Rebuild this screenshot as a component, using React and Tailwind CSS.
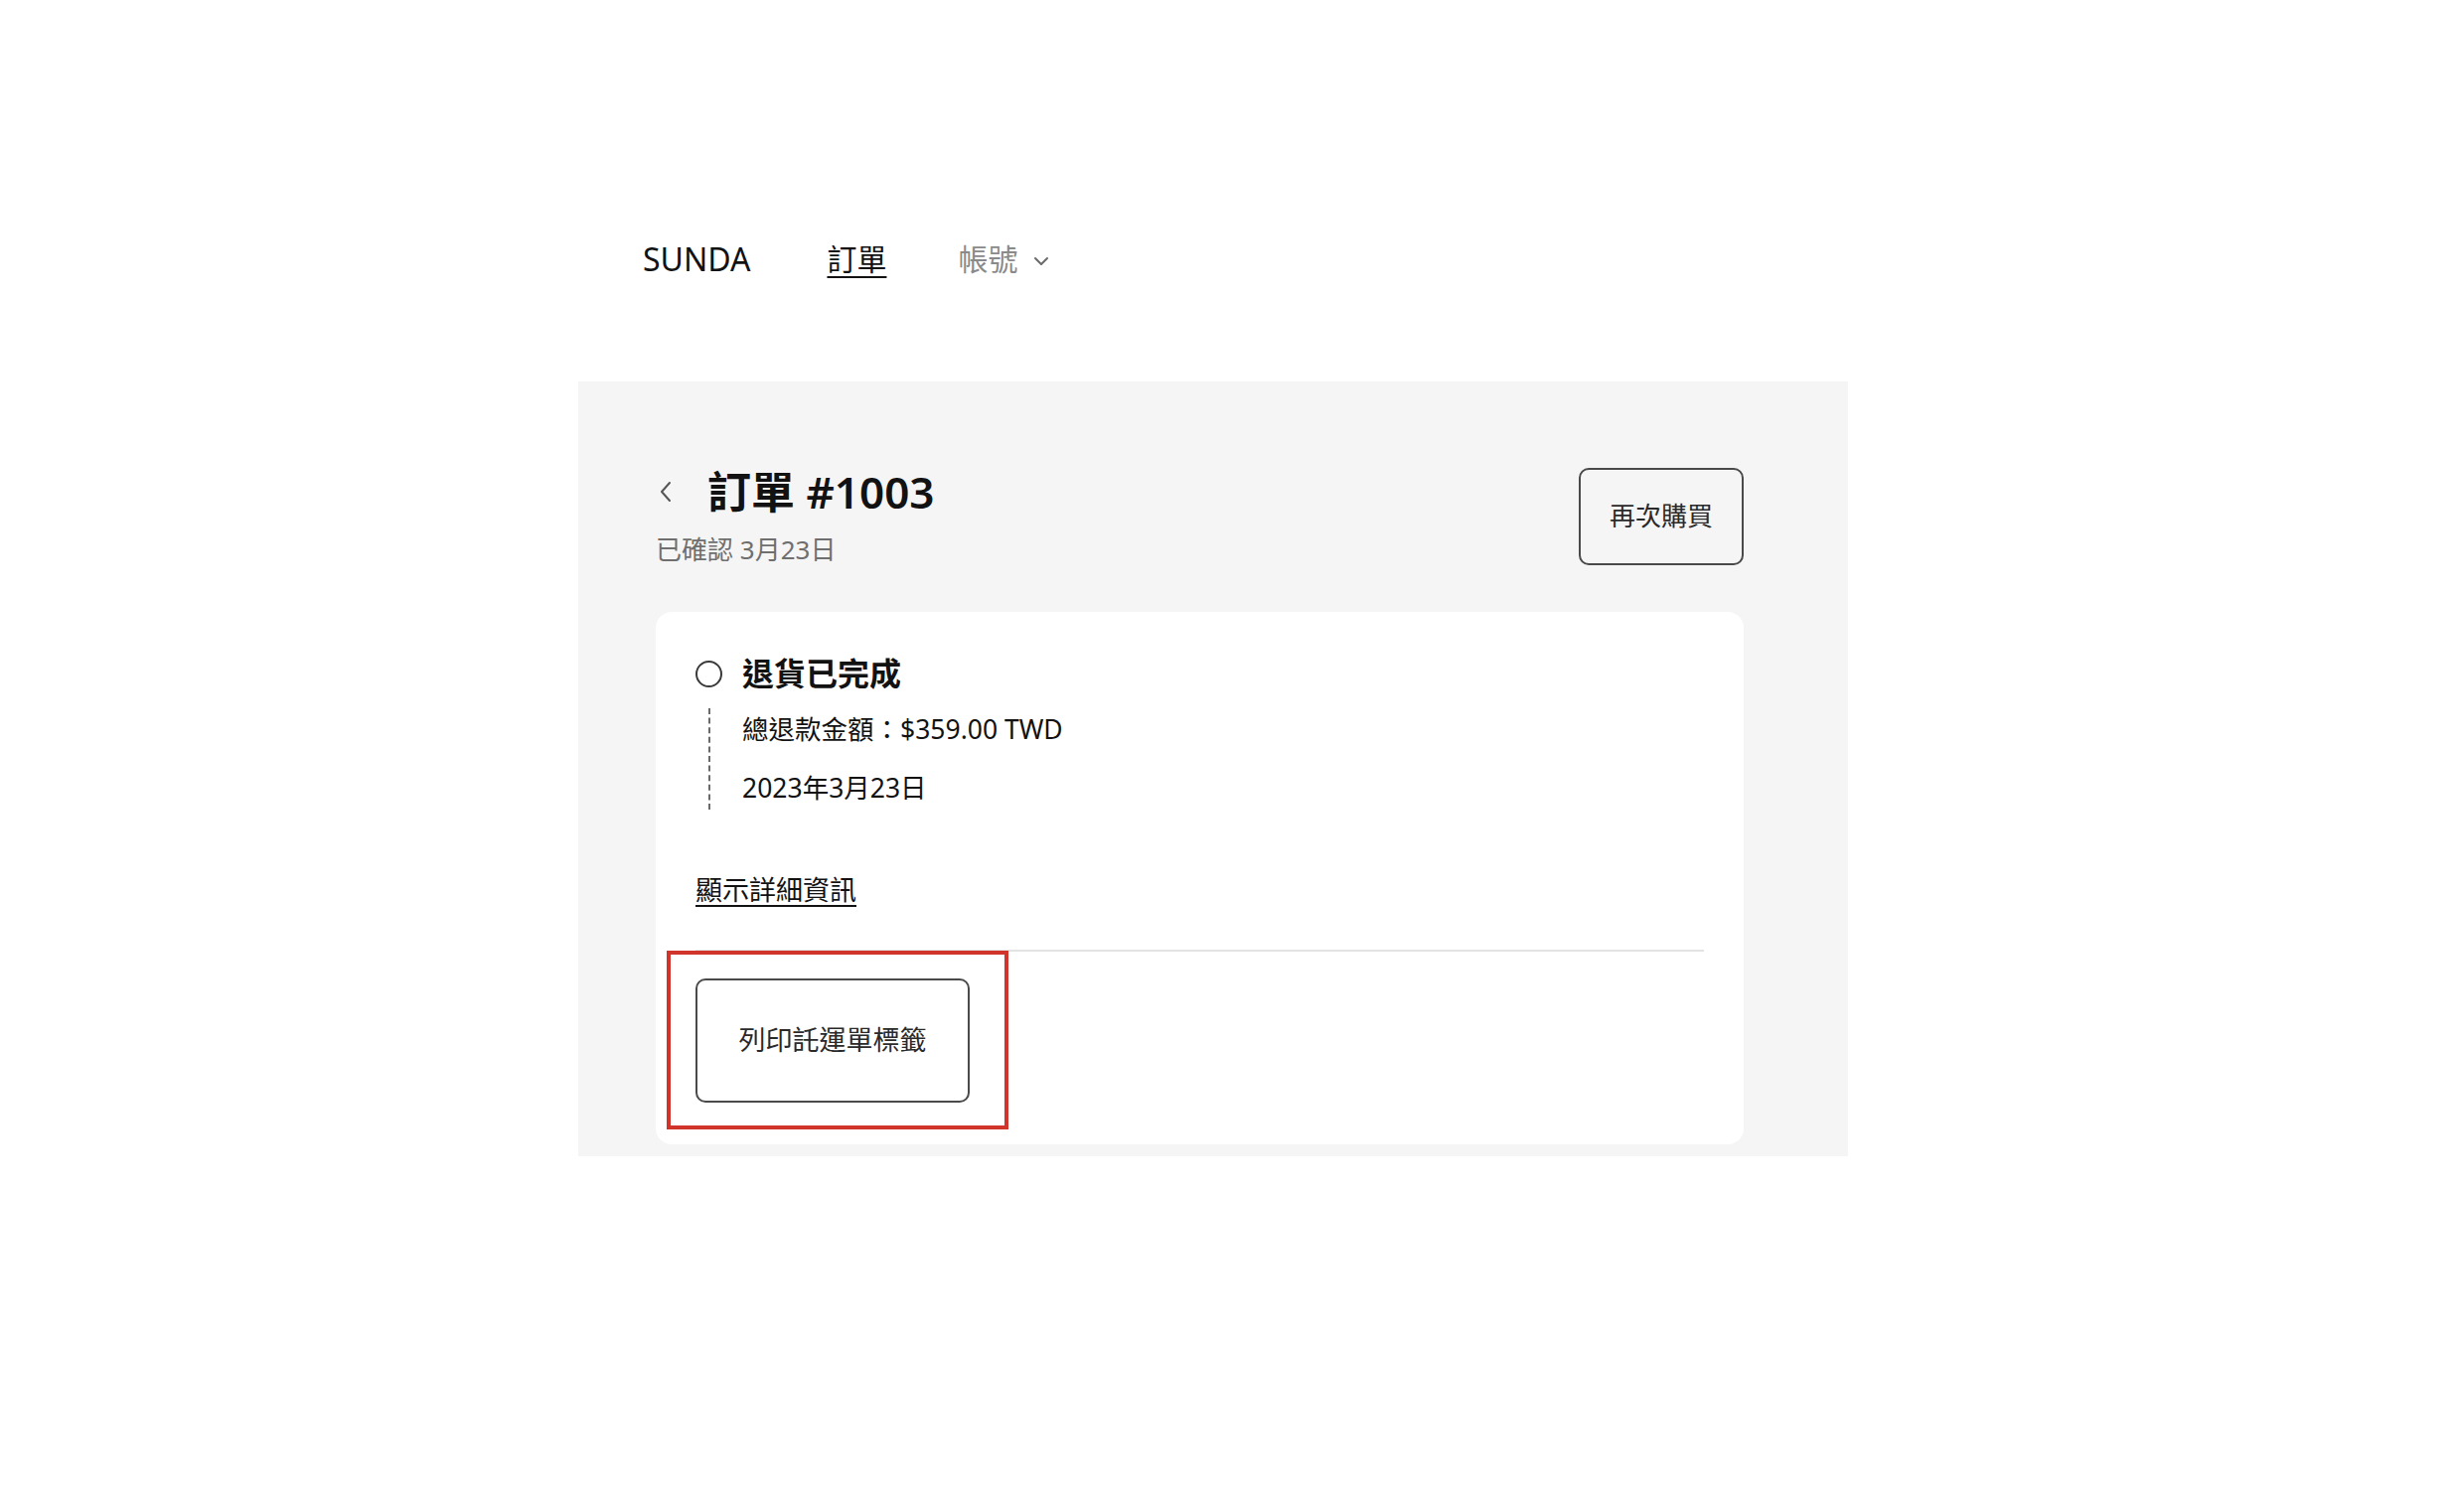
export default function App() {
  const font = "font-['Noto_Sans','Noto_Sans_CJK_TC',sans-serif]";
  return (
    <div className={`${font} min-h-screen w-full bg-white text-[#121212]`}>
      {/* Header */}
      <div className="ml-[582px] pt-[236px]">
        <div className="flex h-[50px] items-center pl-[65px]">
          <span className="text-[32px] leading-none">SUNDA</span>
          <span className="ml-[77px] text-[30px] leading-none underline decoration-[1.5px] underline-offset-[6px]">
            訂單
          </span>
          <span className="ml-[72px] flex items-center text-[30px] leading-none text-[#8a8a8a]">
            帳號
            <svg className="ml-[16px] mt-[4px]" width="16" height="10" viewBox="0 0 16 10" fill="none">
              <path d="M2 2 L8 8 L14 2" stroke="#6b6b6b" strokeWidth="2" strokeLinecap="round" strokeLinejoin="round" />
            </svg>
          </span>
        </div>
      </div>

      {/* Panel */}
      <div className="ml-[582px] mt-[98px] h-[780px] w-[1278px] bg-[#f5f5f5] pl-[78px] pr-[105px] pt-[82px]">
        {/* Title row */}
        <div className="flex items-center justify-between">
          <div className="flex flex-col">
            <div className="flex h-[57px] items-center">
              <svg className="ml-[3px]" width="14" height="22" viewBox="0 0 14 22" fill="none">
                <path d="M11 2 L3 11 L11 20" stroke="#555555" strokeWidth="2" strokeLinecap="round" strokeLinejoin="round" />
              </svg>
              <h1 className="ml-[35px] text-[44px] font-semibold leading-none">訂單 #1003</h1>
            </div>
            <div className="mt-[10px] flex h-[40px] items-center text-[26px] leading-none text-[#6f6f6f]">
              已確認 3月23日
            </div>
          </div>
          <button className="flex h-[98px] w-[166px] items-center justify-center rounded-[10px] border-2 border-[#4a4a4a] text-[26px] text-[#2a2a2a]">
            再次購買
          </button>
        </div>

        {/* Card */}
        <div className="mt-[43px] h-[536px] rounded-[16px] bg-white px-[40px] pt-[40px]">
          <div className="flex h-[44px] items-center">
            <div className="h-[27px] w-[27px] rounded-full border-2 border-[#3a3a3a]" />
            <span className="ml-[20px] text-[32px] font-semibold leading-none">退貨已完成</span>
          </div>

          <div className="ml-[13px] mt-[13px] flex flex-col gap-[16px] border-l-2 border-dashed border-[#6a6a6a] pl-[32px]">
            <div className="flex h-[43px] items-center text-[26.5px] leading-none">總退款金額：$359.00 TWD</div>
            <div className="flex h-[43px] items-center text-[26.5px] leading-none">2023年3月23日</div>
          </div>

          <div className="mt-[60px] flex h-[40px] items-center">
            <span className="text-[27px] leading-none underline decoration-[1.5px] underline-offset-[5px]">
              顯示詳細資訊
            </span>
          </div>

          <div className="mt-[41px] h-[2px] w-full bg-[#e3e3e3]" />

          <div className="relative mt-[27px] w-[276px]">
            <button className="flex h-[125px] w-[276px] items-center justify-center rounded-[10px] border-2 border-[#4a4a4a] text-[27px] text-[#2a2a2a]">
              列印託運單標籤
            </button>
            <div className="pointer-events-none absolute left-[-29px] top-[-28px] h-[180px] w-[344px] border-4 border-[#d1342b]" />
          </div>
        </div>
      </div>
    </div>
  );
}
